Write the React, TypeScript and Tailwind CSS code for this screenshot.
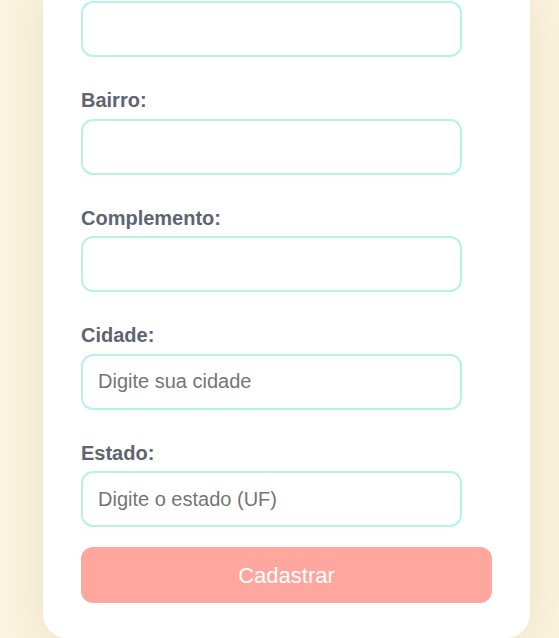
import React from 'react';

const fields = [
  { label: '', placeholder: '' },
  { label: 'Bairro:', placeholder: '' },
  { label: 'Complemento:', placeholder: '' },
  { label: 'Cidade:', placeholder: 'Digite sua cidade' },
  { label: 'Estado:', placeholder: 'Digite o estado (UF)' },
];

export default function App() {
  return (
    <div
      className="h-[638px] w-[559px] overflow-hidden bg-[#faf3dd]"
      style={{ fontFamily: '"Liberation Sans", Arial, sans-serif' }}
    >
      <div className="ml-[43px] w-[487px] rounded-b-[24px] bg-white px-[38px] pb-[35px] pt-px shadow-[0_0_40px_rgba(120,90,30,0.12)]">
        <form className="flex flex-col" onSubmit={(e) => e.preventDefault()}>
          {fields.map((f, i) => (
            <div key={i} className="flex flex-col">
              {f.label && (
                <label className="mb-[7px] mt-[32px] text-[20px] font-bold leading-[22.5px] text-[#5e6472]">
                  {f.label}
                </label>
              )}
              <input
                type="text"
                placeholder={f.placeholder}
                className="h-[56px] w-[381px] rounded-[12px] border-2 border-[#b8f2e6] bg-white px-[15px] text-[20px] text-[#5e6472] outline-none placeholder:text-[#757575]"
              />
            </div>
          ))}
          <button
            type="submit"
            className="mt-[20px] h-[56px] w-full rounded-[12px] bg-[#ffa69e] text-[22px] text-white"
          >
            Cadastrar
          </button>
        </form>
      </div>
    </div>
  );
}
